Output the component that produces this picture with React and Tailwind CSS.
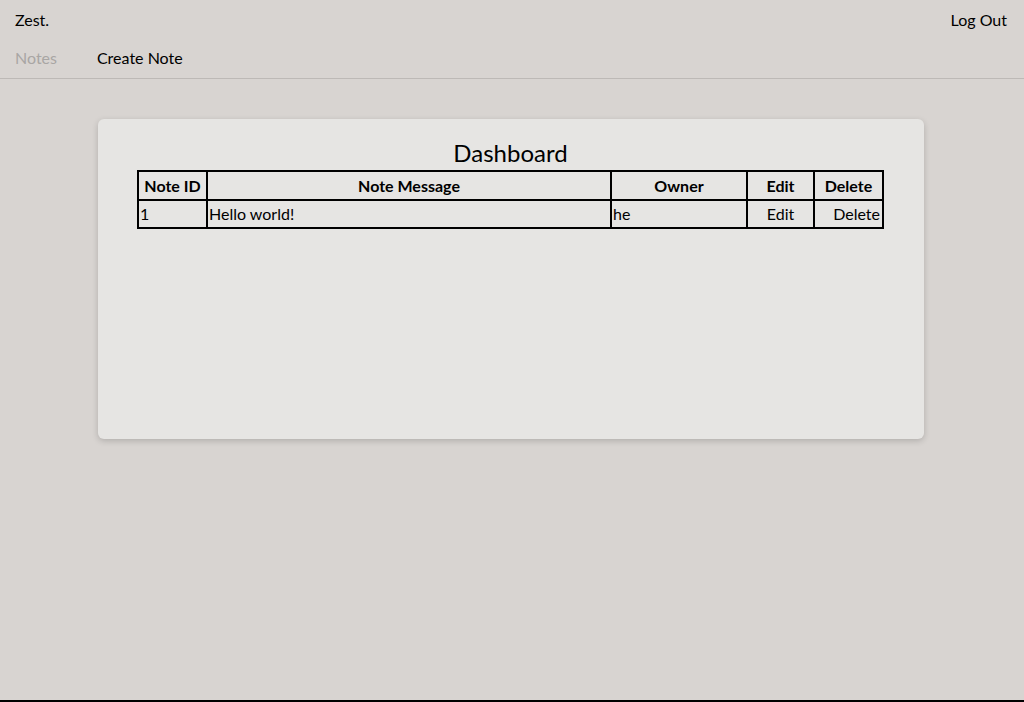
export default function App() {
  const notes = [{ id: 1, message: "Hello world!", owner: "he" }];

  return (
    <div className="min-h-screen bg-[#d8d4d1] text-black border-b-2 border-black" style={{ fontFamily: "Lato, 'Noto Sans', sans-serif" }}>
      <header className="border-b border-[#bdb9b6]">
        <div className="flex items-center justify-between pl-[15px] pr-[17px] h-[39px] text-[16px]">
          <span>Zest.</span>
          <button className="text-[16px]">Log Out</button>
        </div>
        <nav className="flex items-center gap-[40px] px-[15px] h-[39px] pb-[1px] text-[16px]">
          <span className="text-[#a9a6a4]">Notes</span>
          <span>Create Note</span>
        </nav>
      </header>

      <main className="pt-[40px]">
        <div className="w-[826px] h-[320px] ml-[98px] bg-[#e6e5e3] rounded-md shadow-[0_2px_6px_rgba(0,0,0,0.18)] pl-[39px] pr-[40px] pt-[17px]">
          <h1 className="text-center text-[24px] leading-[34px]">Dashboard</h1>
          <table className="w-full border-collapse text-[16px]">
            <thead>
              <tr className="h-[29px]">
                <th className="border-2 border-black font-bold w-[69px] px-1">Note ID</th>
                <th className="border-2 border-black font-bold">Note Message</th>
                <th className="border-2 border-black font-bold w-[136px]">Owner</th>
                <th className="border-2 border-black font-bold w-[67px]">Edit</th>
                <th className="border-2 border-black font-bold w-[69px]">Delete</th>
              </tr>
            </thead>
            <tbody>
              {notes.map((note) => (
                <tr key={note.id} className="h-[28px]">
                  <td className="border-2 border-black px-[1px]">{note.id}</td>
                  <td className="border-2 border-black px-[1px]">{note.message}</td>
                  <td className="border-2 border-black px-[1px]">{note.owner}</td>
                  <td className="border-2 border-black text-center">Edit</td>
                  <td className="border-2 border-black text-right pr-[2px]">Delete</td>
                </tr>
              ))}
            </tbody>
          </table>
        </div>
      </main>
    </div>
  );
}
